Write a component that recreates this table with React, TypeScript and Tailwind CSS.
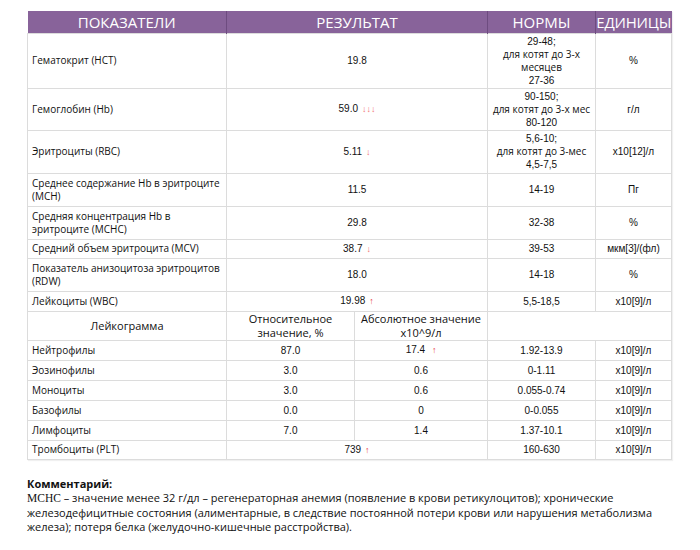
import React from "react";

const label = "font-['Open_Sans',sans-serif] font-medium text-[10px] leading-[13px] text-[#111]";
const num = "font-['Liberation_Sans',Arial,sans-serif] text-[10px] leading-[13px] text-[#111]";
const cell = "border border-[#dcdcdc] align-middle";

function Down({ n = 1 }: { n?: number }) {
  return <span className="ml-[4px] text-[9px] font-bold text-[#f26d6d]">{"↓".repeat(n)}</span>;
}

function Up() {
  return <span className="ml-[4px] text-[9px] font-bold text-[#e8413e]">↑</span>;
}

interface MainRow {
  name: React.ReactNode;
  value: React.ReactNode;
  norm: React.ReactNode;
  unit: string;
  h: string;
}

const mainRows: MainRow[] = [
  {
    name: "Гематокрит (НСТ)",
    value: "19.8",
    norm: (
      <>
        <span className={num}>29-48;</span>
        <br />
        для котят до 3-х
        <br />
        месяцев
        <br />
        <span className={num}>27-36</span>
      </>
    ),
    unit: "%",
    h: "h-[55px]",
  },
  {
    name: "Гемоглобин (Hb)",
    value: (
      <>
        59.0
        <Down n={3} />
      </>
    ),
    norm: (
      <>
        <span className={num}>90-150;</span>
        <br />
        для котят до 3-х мес
        <br />
        <span className={num}>80-120</span>
      </>
    ),
    unit: "г/л",
    h: "h-[42px]",
  },
  {
    name: "Эритроциты (RBC)",
    value: (
      <>
        5.11
        <Down />
      </>
    ),
    norm: (
      <>
        <span className={num}>5,6-10;</span>
        <br />
        для котят до 3-мес
        <br />
        <span className={num}>4,5-7,5</span>
      </>
    ),
    unit: "x10[12]/л",
    h: "h-[43px]",
  },
  {
    name: (
      <>
        Среднее содержание Hb в эритроците
        <br />
        (MCH)
      </>
    ),
    value: "11.5",
    norm: <span className={num}>14-19</span>,
    unit: "Пг",
    h: "h-[33px]",
  },
  {
    name: (
      <>
        Средняя концентрация Hb в
        <br />
        эритроците (MCHC)
      </>
    ),
    value: "29.8",
    norm: <span className={num}>32-38</span>,
    unit: "%",
    h: "h-[33px]",
  },
  {
    name: "Средний объем эритроцита (MCV)",
    value: (
      <>
        38.7
        <Down />
      </>
    ),
    norm: <span className={num}>39-53</span>,
    unit: "мкм[3]/(фл)",
    h: "h-[19px]",
  },
  {
    name: (
      <>
        Показатель анизоцитоза эритроцитов
        <br />
        (RDW)
      </>
    ),
    value: "18.0",
    norm: <span className={num}>14-18</span>,
    unit: "%",
    h: "h-[33px]",
  },
  {
    name: "Лейкоциты (WBC)",
    value: (
      <>
        19.98
        <Up />
      </>
    ),
    norm: <span className={num}>5,5-18,5</span>,
    unit: "x10[9]/л",
    h: "h-[20px]",
  },
];

const leukoRows: [string, string, React.ReactNode, string][] = [
  ["Нейтрофилы", "87.0", <>17.4 <Up /></>, "1.92-13.9"],
  ["Эозинофилы", "3.0", "0.6", "0-1.11"],
  ["Моноциты", "3.0", "0.6", "0.055-0.74"],
  ["Базофилы", "0.0", "0", "0-0.055"],
  ["Лимфоциты", "7.0", "1.4", "1.37-10.1"],
];

function MainTr({ r }: { r: MainRow }) {
  return (
    <tr className={r.h}>
      <td className={`${cell} ${label} pl-[4px] pr-[2px]`}>{r.name}</td>
      <td colSpan={2} className={`${cell} ${num} text-center`}>
        {r.value}
      </td>
      <td className={`${cell} ${label} text-center`}>{r.norm}</td>
      <td className={`${cell} ${num} text-center`}>{r.unit}</td>
    </tr>
  );
}

const leukoHead = "font-['Open_Sans',sans-serif] font-medium text-[11px] leading-[14px] text-[#111] text-center";

export default function App() {
  return (
    <div className="min-h-[550px] w-[700px] bg-white pt-[11px] pl-[27px]">
      <table className="w-[644px] table-fixed border-collapse shadow-[1px_1px_1px_rgba(0,0,0,0.06)]">
        <colgroup>
          <col className="w-[199px]" />
          <col className="w-[128px]" />
          <col className="w-[133px]" />
          <col className="w-[108px]" />
          <col className="w-[76px]" />
        </colgroup>
        <thead>
          <tr className="h-[22px] bg-[#88639a] font-['Open_Sans',sans-serif] text-[15px] leading-[20px] text-white">
            <th className="border-r border-[#6e4c80] font-normal">ПОКАЗАТЕЛИ</th>
            <th colSpan={2} className="border-r border-[#6e4c80] font-normal">
              РЕЗУЛЬТАТ
            </th>
            <th className="border-r border-[#6e4c80] font-normal">НОРМЫ</th>
            <th className="whitespace-nowrap font-normal tracking-[-0.2px]">ЕДИНИЦЫ</th>
          </tr>
        </thead>
        <tbody>
          {mainRows.map((r, i) => (
            <MainTr key={i} r={r} />
          ))}
          <tr className="h-[29px]">
            <td className={`${cell} ${leukoHead}`}>Лейкограмма</td>
            <td className={`${cell} ${leukoHead}`}>
              Относительное
              <br />
              значение, %
            </td>
            <td className={`${cell} ${leukoHead}`}>
              Абсолютное значение
              <br />
              x10^9/л
            </td>
            <td colSpan={2} className={cell}></td>
          </tr>
          {leukoRows.map(([n, rel, abs, norm]) => (
            <tr key={n} className="h-[20px]">
              <td className={`${cell} ${label} pl-[4px]`}>{n}</td>
              <td className={`${cell} ${num} text-center`}>{rel}</td>
              <td className={`${cell} ${num} text-center`}>{abs}</td>
              <td className={`${cell} ${num} text-center`}>{norm}</td>
              <td className={`${cell} ${num} text-center`}>x10[9]/л</td>
            </tr>
          ))}
          <MainTr
            r={{
              name: "Тромбоциты (PLT)",
              value: (
                <>
                  739
                  <Up />
                </>
              ),
              norm: <span className={num}>160-630</span>,
              unit: "x10[9]/л",
              h: "h-[19px]",
            }}
          />
        </tbody>
      </table>

      <div className="mt-[17px] w-[660px] font-['Open_Sans',sans-serif] text-[11px] leading-[14.5px] text-[#111]">
        <p className="font-bold">Комментарий:</p>
        <p>
          <span className="font-['Liberation_Serif',serif] text-[11.5px]">МСНС</span> – значение менее 32 г/дл –
          регенераторная анемия (появление в крови ретикулоцитов); хронические
          <br />
          железодефицитные состояния (алиментарные, в следствие постоянной потери крови или нарушения метаболизма
          <br />
          железа); потеря белка (желудочно-кишечные расстройства).
        </p>
        <p className="mt-[13px] font-bold">Основной показатель:</p>
      </div>
    </div>
  );
}
